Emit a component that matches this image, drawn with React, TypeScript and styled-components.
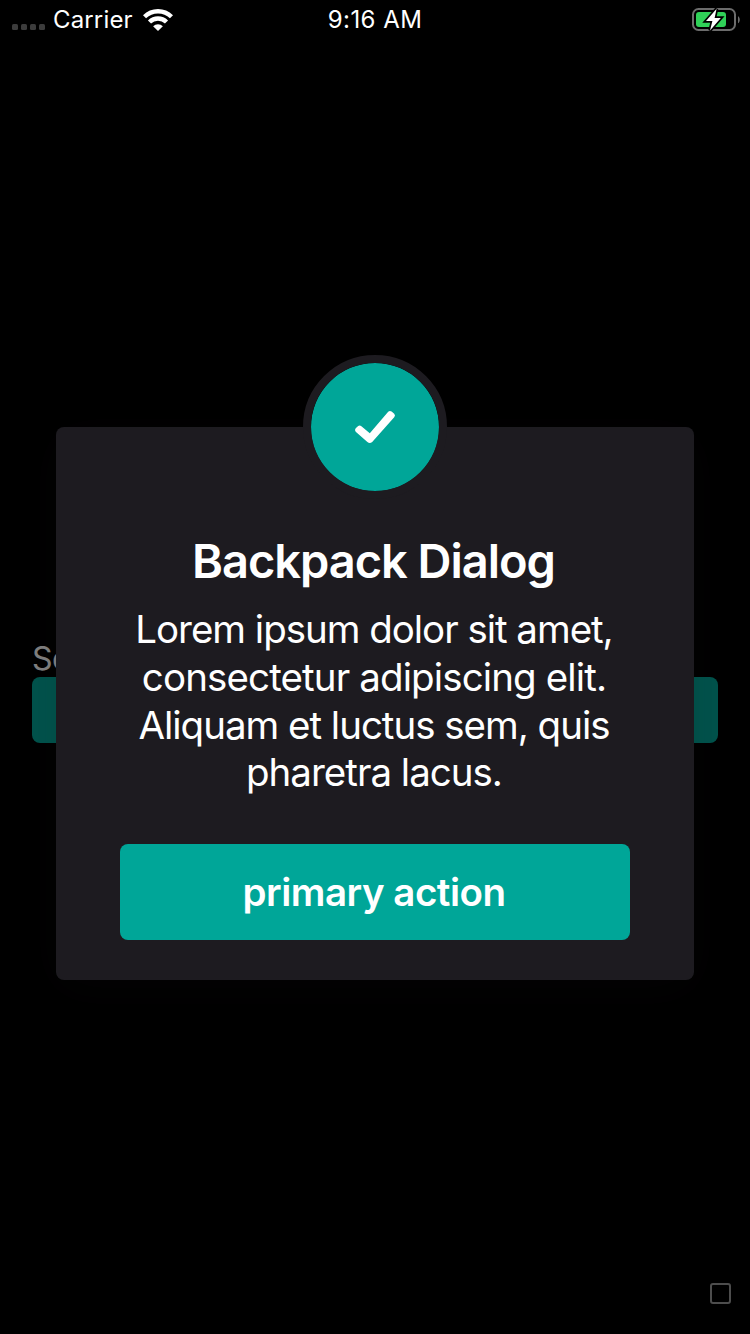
import React from "react";
import styled, { createGlobalStyle } from "styled-components";

const GlobalStyle = createGlobalStyle`
  * { box-sizing: border-box; }
  body { margin: 0; background: #000; }
`;

const Screen = styled.main`
  position: relative;
  display: flex;
  flex-direction: column;
  width: 750px;
  height: 1334px;
  overflow: hidden;
  background: #000;
  color: #fff;
  font-family: Inter, "Liberation Sans", sans-serif;
`;

const StatusBar = styled.header`
  display: grid;
  grid-template-columns: 1fr auto 1fr;
  align-items: center;
  height: 40px;
  padding: 0 10px 0 12px;
  font-size: 24px;
  line-height: 40px;
`;

const Network = styled.div`
  display: flex;
  align-items: center;
`;

const Carrier = styled.span`
  margin: 0 10px 0 7px;
  letter-spacing: 0.15px;
`;

const Time = styled.span`
  margin-right: 2px;
  letter-spacing: 0.45px;
`;

const BatteryIcon = styled.svg`
  justify-self: end;
`;

const Backdrop = styled.section`
  display: flex;
  flex-direction: column;
  margin-top: 600px;
  padding: 0 32px;
  opacity: 0.5;
`;

const SectionLabel = styled.span`
  font-size: 32px;
  line-height: 37px;
  letter-spacing: -0.5px;
`;

const DimmedButton = styled.div`
  height: 66px;
  border-radius: 8px;
  background: #00a698;
`;

const HomeMark = styled.i`
  align-self: flex-end;
  width: 21px;
  height: 21px;
  margin: auto 19px 30px 0;
  border: 2px solid #4d4d4d;
  border-radius: 3px;
`;

const Dialog = styled.section`
  position: absolute;
  top: 427px;
  left: 56px;
  display: flex;
  flex-direction: column;
  align-items: center;
  width: 638px;
  height: 553px;
  padding: 0 64px 40px;
  border-radius: 8px;
  background: #1d1b20;
  box-shadow: 0 8px 48px rgba(29, 27, 32, 0.12);
`;

const Badge = styled.div`
  display: grid;
  place-items: center;
  flex: none;
  width: 144px;
  height: 144px;
  margin-top: -72px;
  border: 8px solid #1d1b20;
  border-radius: 50%;
  background: #00a698;
  background-clip: padding-box;
`;

const Title = styled.h1`
  margin: 33px 3px 0 0;
  font-size: 47px;
  font-weight: 600;
  line-height: 57px;
  letter-spacing: -1.03px;
  white-space: nowrap;
`;

const Message = styled.p`
  display: flex;
  flex-direction: column;
  align-items: center;
  margin: 16px 2px 0 0;
  font-size: 38.5px;
  line-height: 48px;
  white-space: nowrap;
`;

const Line = styled.span<{ $tracking: number }>`
  letter-spacing: ${({ $tracking }) => $tracking}px;

  &:last-child {
    line-height: 46px;
  }
`;

const PrimaryButton = styled.button`
  flex: none;
  width: 100%;
  height: 96px;
  margin-top: auto;
  padding: 0 2px 0 0;
  border: 0;
  border-radius: 8px;
  background: #00a698;
  color: #fff;
  font: 600 38.5px/96px Inter, "Liberation Sans", sans-serif;
  letter-spacing: -0.5px;
`;

const lines = [
  { text: "Lorem ipsum dolor sit amet,", tracking: -1.03 },
  { text: "consectetur adipiscing elit.", tracking: -0.88 },
  { text: "Aliquam et luctus sem, quis", tracking: -1.02 },
  { text: "pharetra lacus.", tracking: -1.0 },
];

export default function App() {
  return (
    <Screen>
      <GlobalStyle />
      <StatusBar>
        <Network>
          <svg width="34" height="40" fill="#3c3c3c">
            {[0, 9, 18, 27].map((x) => (
              <rect key={x} x={x} y="24" width="6" height="6" rx="1.5" />
            ))}
          </svg>
          <Carrier>Carrier</Carrier>
          <svg width="30" height="40" viewBox="0 0 30 40">
            <g fill="none" stroke="#fff" strokeWidth="4.4">
              <path d="M1.5 16.8a19.2 19.2 0 0 1 27 0" />
              <path d="M6.5 22a12.1 12.1 0 0 1 17 0" />
            </g>
            <path fill="#fff" d="M10.1 26.3a7 7 0 0 1 9.8 0L15 31z" />
          </svg>
        </Network>
        <Time>9:16 AM</Time>
        <BatteryIcon width="48" height="40" viewBox="0 0 48 40">
          <rect x="1" y="9" width="42" height="21" rx="5.5" fill="none" stroke="#6c6c6c" strokeWidth="2" />
          <path d="M46 16.2c2.4 1.2 2.4 5.8 0 7z" fill="#6c6c6c" />
          <rect x="4" y="12" width="30" height="15" rx="3" fill="#30d158" />
          <path d="M24.6 8.8 14 21h6.4l-2.4 9.4L28.8 18h-6.2z" fill="#fff" stroke="#000" strokeWidth="3.4" paintOrder="stroke" />
        </BatteryIcon>
      </StatusBar>
      <Backdrop>
        <SectionLabel>So</SectionLabel>
        <DimmedButton />
      </Backdrop>
      <HomeMark />
      <Dialog>
        <Badge>
          <svg width="48" height="48" viewBox="0 0 48 48">
            <path
              d="M6.9 23.2 4.7 25.3Q3.2 27 4.7 28.8L16.4 39Q18.8 41 21.2 39L43.2 14.3Q44.8 12.4 43.2 10.8L40.6 8.6Q38.8 7.2 37.2 8.8L18.8 30.2 10.4 23.2Q8.6 21.8 6.9 23.2Z"
              fill="#fff"
            />
          </svg>
        </Badge>
        <Title>Backpack Dialog</Title>
        <Message>
          {lines.map(({ text, tracking }) => (
            <Line key={text} $tracking={tracking}>{text}</Line>
          ))}
        </Message>
        <PrimaryButton>primary action</PrimaryButton>
      </Dialog>
    </Screen>
  );
}
